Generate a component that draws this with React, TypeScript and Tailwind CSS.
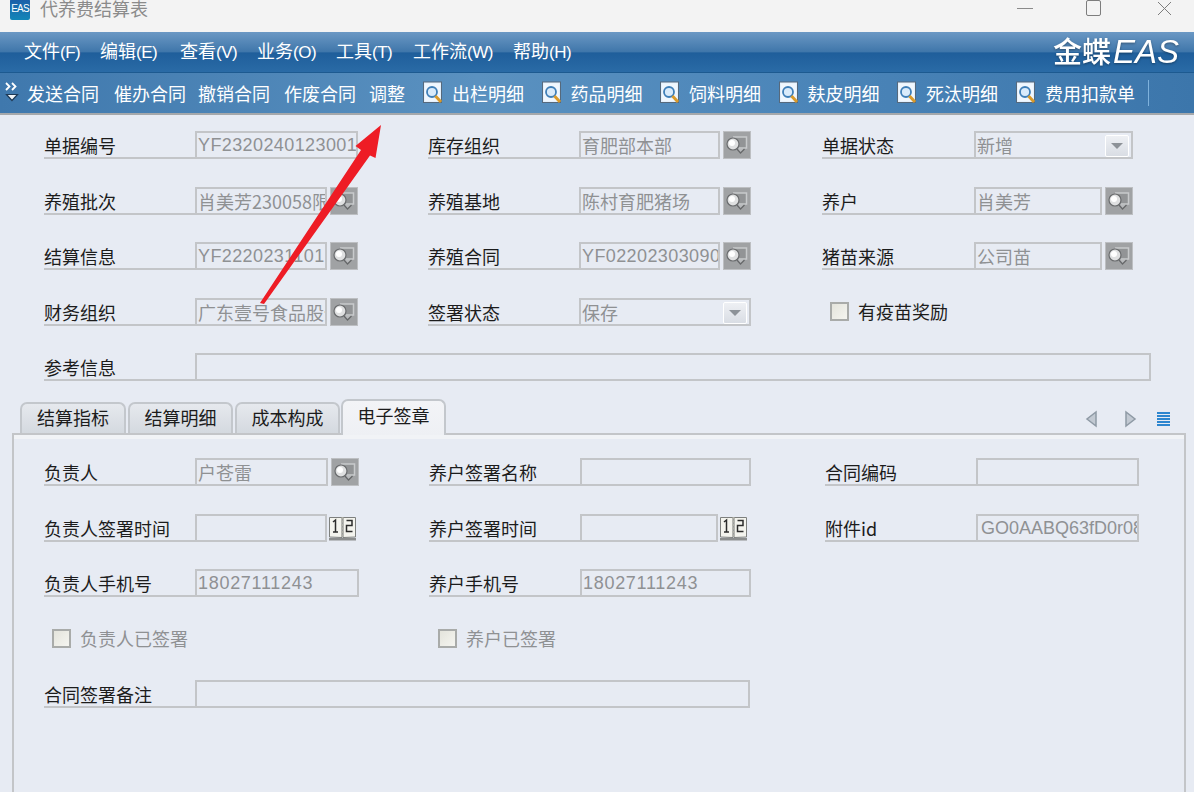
import React from "react";

const CJK = "font-['Noto_Sans_CJK_SC','Noto_Sans_CJK_JP',sans-serif]";
const LAT = "font-['Liberation_Sans','Noto_Sans_CJK_SC',sans-serif]";

function Lookup() {
  return (
    <div className="ml-[3px] w-[28px] h-[28px] shrink-0 bg-[#a0a2a4] border border-[#bdbfc2] flex items-center justify-center">
      <svg width="24" height="24" viewBox="0 0 24 24">
        <path d="M8 4h13.500v11h-6l-2 0" fill="#929496" stroke="#c8cacc" strokeWidth="1.5" />
        <path d="M12 16l3.500 4 4-4" fill="#b8babc" stroke="#66686a" strokeWidth="1.300" />
        <circle cx="8" cy="11" r="6" fill="#dfe0e1" stroke="#6a6c6e" strokeWidth="1.200" />
        <circle cx="7" cy="10" r="3" fill="#ffffff" />
      </svg>
    </div>
  );
}

function CalendarBtn() {
  return (
    <div className="ml-[1px] w-[29px] h-[28px] shrink-0 flex items-center justify-center">
      <svg width="29" height="26" viewBox="0 0 29 26">
        <path d="M1 23h27v2.500H1z" fill="#8c8e8e" />
        <path d="M1.500 22V2.500h12.500v20zM15 22.500V2.500h12.500V22z" fill="#f4f4ee" stroke="#7e807e" strokeWidth="1" />
        <path d="M14.500 2v20" stroke="#b0b0a8" strokeWidth="2" strokeDasharray="2 1.500" />
        <path d="M5 7l2.500-2V17M5 17h5" fill="none" stroke="#2c2c2c" strokeWidth="1.500" />
        <path d="M18.500 5.500h5.500v5h-5.500v6h6" fill="none" stroke="#2c2c2c" strokeWidth="1.500" />
      </svg>
    </div>
  );
}

function DropBtn() {
  return (
    <div className="absolute right-[2px] top-[2px] w-[24px] h-[22px] bg-gradient-to-b from-[#eef0f4] to-[#d9dde4] border border-white rounded-[2px] flex items-center justify-center">
      <svg width="12" height="8" viewBox="0 0 12 8"><path d="M0 1h12L6 7z" fill="#8d9298" /></svg>
    </div>
  );
}

function Input({ w, value, latin, select, track = 0.4, pl = 1 }: { w: number; value?: string; latin?: boolean; select?: boolean; track?: number; pl?: number }) {
  return (
    <div
      style={{ width: w, letterSpacing: latin ? track : undefined, paddingLeft: pl }}
      className={`relative h-[28px] shrink-0 border-2 border-[#c3c5c8] overflow-hidden whitespace-nowrap leading-[24px] text-[#8f9193] text-[18px] ${latin ? LAT : CJK}`}
    >
      {value}
      {select && <DropBtn />}
    </div>
  );
}

function Label({ text, w }: { text: string; w: number }) {
  return (
    <div
      style={{ width: w }}
      className={`h-[28px] shrink-0 border-b-2 border-[#c3c5c8] leading-[28px] text-[18px] whitespace-nowrap text-[#1c1c1c] ${CJK}`}
    >
      {text}
    </div>
  );
}

function Check({ text, disabled, ml }: { text: string; disabled?: boolean; ml: number }) {
  return (
    <div style={{ marginLeft: ml }} className={`h-[28px] flex items-center gap-[9px] text-[18px] whitespace-nowrap ${CJK} ${disabled ? "text-[#8f9193]" : "text-[#1c1c1c]"}`}>
      <div className="w-[19px] h-[19px] border-2 border-[#a9aba9] bg-gradient-to-br from-[#e4e4dc] to-[#f5f5f0]" />
      {text}
    </div>
  );
}

function ToolIcon() {
  return (
    <svg width="21" height="24" viewBox="0 0 21 24" className="shrink-0">
      <rect x="0.500" y="1" width="18" height="20.500" fill="#e4f0fc" stroke="#56697c" />
      <rect x="2" y="2.500" width="15" height="17.500" fill="#f0f7fe" />
      <circle cx="9" cy="11" r="5" fill="#d9ebfb" stroke="#3f7fb8" strokeWidth="1.800" />
      <path d="M12.500 15l5.500 6" stroke="#d99a2b" strokeWidth="3" />
    </svg>
  );
}

const menus: [string, number][] = [
  ["文件(F)", 76], ["编辑(E)", 80], ["查看(V)", 77], ["业务(O)", 79], ["工具(T)", 77], ["工作流(W)", 100], ["帮助(H)", 66],
];

function MenuItem({ label, w }: { label: string; w: number }) {
  const i = label.indexOf("(");
  return (
    <div style={{ width: w }} className="shrink-0 whitespace-nowrap">
      {label.slice(0, i)}
      <span className={`${LAT} text-[17px] tracking-[-0.5px] font-normal`}>{label.slice(i)}</span>
    </div>
  );
}

const tools: { t: string; w: number }[] = [
  { t: "出栏明细", w: 118.5 }, { t: "药品明细", w: 118.5 }, { t: "饲料明细", w: 118.5 }, { t: "麸皮明细", w: 118.5 }, { t: "死汰明细", w: 119 }, { t: "费用扣款单", w: 133 },
];

const Row = ({ children }: { children: React.ReactNode }) => (
  <div className="h-[28px] flex items-start">{children}</div>
);

const C1 = ({ children }: { children: React.ReactNode }) => <div className="w-[384px] shrink-0 flex">{children}</div>;
const C2 = ({ children }: { children: React.ReactNode }) => <div className="w-[394px] shrink-0 flex">{children}</div>;
const P1 = ({ children }: { children: React.ReactNode }) => <div className="w-[385px] shrink-0 flex">{children}</div>;
const P2 = ({ children }: { children: React.ReactNode }) => <div className="w-[396px] shrink-0 flex">{children}</div>;

export default function App() {
  return (
    <div className="relative w-[1194px] h-[792px] overflow-hidden bg-[#e7ebf3] flex flex-col">
      {/* title bar */}
      <div className="h-[32px] bg-[#f3f3f3] flex items-start shrink-0 relative">
        <div className={`ml-[10px] -mt-[1px] w-[20px] h-[21px] rounded-[2px] bg-gradient-to-b from-[#1c5ea8] to-[#1286b8] text-white text-[10px] leading-[20px] tracking-[-0.8px] text-center ${LAT}`}>EAS</div>
        <div className={`ml-[10px] -mt-[5px] text-[18px] leading-[26px] text-[#8b8b8b] ${CJK}`}>代养费结算表</div>
        <div className="ml-auto flex items-start">
          <div className="mt-[8px] w-[16px] h-[1px] bg-[#8a8a8a]" />
          <div className="ml-[53px] w-[15px] h-[16px] border border-[#7d7d7d] rounded-[2px]" />
          <svg className="ml-[56px] mr-[22px] mt-[1px]" width="15" height="15" viewBox="0 0 15 15"><path d="M1 1l13 13M14 1L1 14" stroke="#7d7d7d" strokeWidth="1" /></svg>
        </div>
      </div>

      {/* menu bar */}
      <div className={`h-[41px] shrink-0 relative border-b border-[#1d5a90] bg-[linear-gradient(180deg,#6b98c4_0%,#3f76aa_50%,#1f5e9b_52%,#2a6ba6_100%)] flex items-start pt-[5px] pl-[24px] text-white text-[18px] leading-[26px] ${CJK}`}>
        {menus.map(([m, w]) => <MenuItem key={m} label={m} w={w} />)}
        <div className="ml-auto mr-[15px] -mt-[4px] flex items-baseline text-white drop-shadow-[0_1px_1px_rgba(0,0,0,0.35)]">
          <span className={`text-[29px] font-medium leading-[34px] ${CJK}`}>金蝶</span>
          <span className={`text-[33px] italic leading-[34px] ml-[2px] ${LAT}`}>EAS</span>
        </div>
      </div>

      {/* toolbar */}
      <div className="h-[42px] shrink-0 border-b-2 border-[#a5a8ab] bg-[linear-gradient(90deg,#3f78ad_0%,#5a91c0_40%,#4a84b8_70%,#3c76ab_100%)] flex items-center text-white text-[18px] relative">
        <div className={`flex items-center w-full whitespace-nowrap ${CJK}`}>
          <svg className="ml-[5px] shrink-0" width="14" height="22" viewBox="0 0 14 22">
            <path d="M1 1l3.500 3.500L1 8M7 1l3.500 3.500L7 8" fill="none" stroke="#fff" strokeWidth="1.800" />
            <path d="M1.500 12.500h11l-5.500 6z" fill="#f1f5f9" stroke="#1e3a57" strokeWidth="1.200" />
          </svg>
          <span className="ml-[8px] w-[87px] shrink-0">发送合同</span>
          <span className="w-[84px] shrink-0">催办合同</span>
          <span className="w-[86px] shrink-0">撤销合同</span>
          <span className="w-[85px] shrink-0">作废合同</span>
          <span className="w-[54px] shrink-0">调整</span>
          {tools.map((x) => (
            <div key={x.t} style={{ width: x.w }} className="flex items-center shrink-0">
              <ToolIcon />
              <span className="ml-[8px]">{x.t}</span>
            </div>
          ))}
          <div className="-ml-[1px] w-[1px] h-[26px] bg-[#7fb2dc]" />
        </div>
      </div>

      {/* form */}
      <div className="pl-[44px] pt-[16px] flex flex-col gap-[27.5px] shrink-0">
        <Row>
          <C1><Label text="单据编号" w={151} /><Input w={163} latin value="YF2320240123001" /></C1>
          <C2><Label text="库存组织" w={151} /><Input w={141} value="育肥部本部" /><Lookup /></C2>
          <Label text="单据状态" w={152} /><Input w={159} value="新增" select />
        </Row>
        <Row>
          <C1><Label text="养殖批次" w={151} /><Input w={132} value="肖美芳230058限" /><Lookup /></C1>
          <C2><Label text="养殖基地" w={151} /><Input w={141} value="陈村育肥猪场" /><Lookup /></C2>
          <Label text="养户" w={152} /><Input w={128} value="肖美芳" /><Lookup />
        </Row>
        <Row>
          <C1><Label text="结算信息" w={151} /><Input w={132} latin value="YF2220231101" /><Lookup /></C1>
          <C2><Label text="养殖合同" w={151} /><Input w={141} latin value="YF02202303090" /><Lookup /></C2>
          <Label text="猪苗来源" w={152} /><Input w={128} value="公司苗" /><Lookup />
        </Row>
        <Row>
          <C1><Label text="财务组织" w={151} /><Input w={132} value="广东壹号食品股份" /><Lookup /></C1>
          <C2><Label text="签署状态" w={151} /><Input w={172} value="保存" select /></C2>
          <Check text="有疫苗奖励" ml={8} />
        </Row>
        <Row>
          <Label text="参考信息" w={151} /><Input w={956} />
        </Row>
      </div>

      {/* tabs */}
      <div className={`mt-[18px] h-[34px] shrink-0 relative flex items-end pl-[20px] text-[18px] text-[#1c1c1c] ${CJK}`}>
        {([["结算指标", 106, 2], ["结算明细", 105, 2], ["成本构成", 105, 1]] as [string, number, number][]).map(([t, w, m]) => (
          <div key={t} style={{ width: w, marginRight: m }} className="h-[31px] shrink-0 rounded-t-[7px] border-2 border-b-0 border-[#c3c7cc] bg-gradient-to-b from-[#e6e9ee] to-[#d4d9df] text-center leading-[27px]">{t}</div>
        ))}
        <div className="relative z-10 -mb-[2px] w-[105px] h-[36px] shrink-0 rounded-t-[7px] border-2 border-b-0 border-[#c3c7cc] bg-gradient-to-b from-[#f3f4f7] to-[#eef0f4] text-center leading-[29px]">电子签章</div>
        <div className="ml-auto mr-[24px] mb-[5px] flex items-center">
          <svg width="13" height="18" viewBox="0 0 13 18"><path d="M11 2v14L2 9z" fill="#c2c9d2" stroke="#8f9aa5" strokeWidth="1.500" /></svg>
          <svg className="ml-[26px]" width="13" height="18" viewBox="0 0 13 18"><path d="M2 2v14l9-7z" fill="#c2c9d2" stroke="#8f9aa5" strokeWidth="1.500" /></svg>
          <svg className="ml-[20px]" width="13" height="15" viewBox="0 0 13 15">
            <path d="M0 1h13M0 4h13M0 7h13M0 10h13M0 13h13" stroke="#2e86cf" strokeWidth="2" />
          </svg>
        </div>
      </div>

      {/* panel */}
      <div className="ml-[12px] w-[1174px] flex-1 border-2 border-b-0 border-[#c3c5c8] shadow-[inset_0_4px_0_#f1f3f6] pl-[30px] pt-[23px] flex flex-col gap-[27.5px]">
        <Row>
          <P1><Label text="负责人" w={151} /><Input w={133} value="户苍雷" /><Lookup /></P1>
          <P2><Label text="养户签署名称" w={151} /><Input w={171} /></P2>
          <Label text="合同编码" w={151} /><Input w={163} />
        </Row>
        <Row>
          <P1><Label text="负责人签署时间" w={151} /><Input w={132} /><CalendarBtn /></P1>
          <P2><Label text="养户签署时间" w={151} /><Input w={138} /><CalendarBtn /></P2>
          <Label text="附件id" w={151} /><Input w={163} latin value="GO0AABQ63fD0r08" track={0} pl={3} />
        </Row>
        <Row>
          <P1><Label text="负责人手机号" w={151} /><Input w={164} latin value="18027111243" track={0.7} /></P1>
          <P2><Label text="养户手机号" w={151} /><Input w={171} latin value="18027111243" track={0.7} /></P2>
        </Row>
        <Row>
          <P1><Check text="负责人已签署" disabled ml={8} /></P1>
          <P2><Check text="养户已签署" disabled ml={9} /></P2>
        </Row>
        <Row>
          <Label text="合同签署备注" w={151} /><Input w={555} />
        </Row>
      </div>

      {/* annotation arrow */}
      <svg className="absolute left-0 top-0 pointer-events-none" width="1194" height="792" viewBox="0 0 1194 792">
        <path d="M260 303L361 150L355.500 146L381 125L375.500 158L370 155.500L264 304Z" fill="#ee1c25" />
      </svg>
    </div>
  );
}
